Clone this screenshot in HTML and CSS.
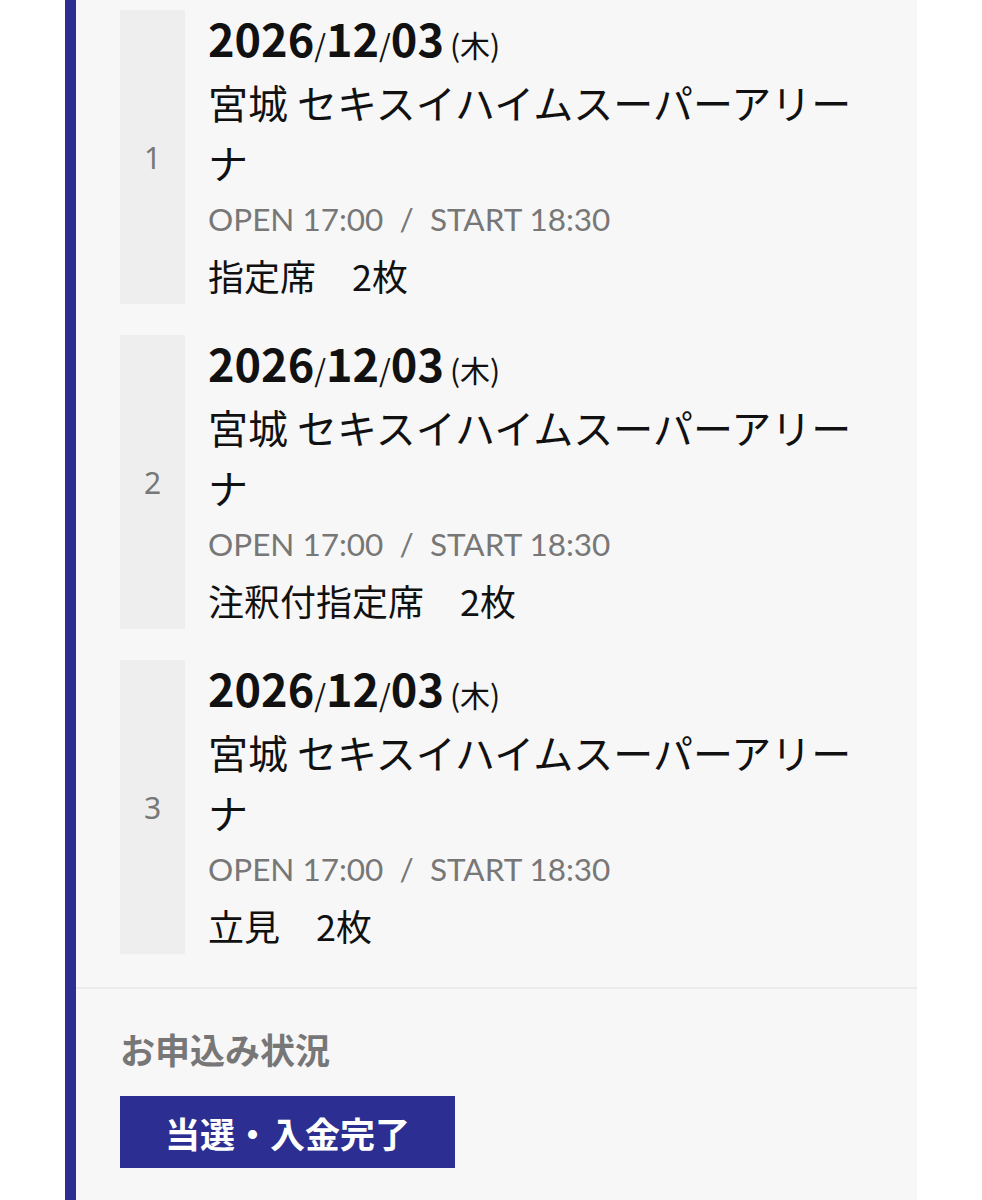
FILE: index.html
```html
<!DOCTYPE html>
<html lang="ja">
<head>
  <meta charset="UTF-8">
  <meta name="viewport" content="width=device-width, initial-scale=1.0">
  <title>お申込み内容</title>
  <link rel="stylesheet" href="styles.css">
</head>
<body>
<div class="entry">
  <ul class="performances">
    <li class="performance">
      <div class="perf-no">1</div>
      <div class="perf-body">
        <p class="perf-date">2026<span class="sep">/</span>12<span class="sep">/</span>03<span class="dow">(木)</span></p>
        <p class="perf-venue">宮城 セキスイハイムスーパーアリーナ</p>
        <p class="perf-time">OPEN 17:00&nbsp;&nbsp;/&nbsp;&nbsp;START 18:30</p>
        <p class="perf-seat">指定席　2枚</p>
      </div>
    </li>
    <li class="performance">
      <div class="perf-no">2</div>
      <div class="perf-body">
        <p class="perf-date">2026<span class="sep">/</span>12<span class="sep">/</span>03<span class="dow">(木)</span></p>
        <p class="perf-venue">宮城 セキスイハイムスーパーアリーナ</p>
        <p class="perf-time">OPEN 17:00&nbsp;&nbsp;/&nbsp;&nbsp;START 18:30</p>
        <p class="perf-seat">注釈付指定席　2枚</p>
      </div>
    </li>
    <li class="performance">
      <div class="perf-no">3</div>
      <div class="perf-body">
        <p class="perf-date">2026<span class="sep">/</span>12<span class="sep">/</span>03<span class="dow">(木)</span></p>
        <p class="perf-venue">宮城 セキスイハイムスーパーアリーナ</p>
        <p class="perf-time">OPEN 17:00&nbsp;&nbsp;/&nbsp;&nbsp;START 18:30</p>
        <p class="perf-seat">立見　2枚</p>
      </div>
    </li>
  </ul>

  <div class="status">
    <h3 class="status-title">お申込み状況</h3>
    <span class="status-badge">当選・入金完了</span>
  </div>
</div>
</body>
</html>
```

FILE: styles.css
```css
body {
  margin: 0;
  background: #fff;
  font-family: "Noto Sans CJK JP", "Noto Sans", sans-serif;
  color: #111;
}
.entry {
  margin-left: 65px;
  width: 841px;
  min-height: 1200px;
  border-left: 11px solid #2c2f91;
  background-color: #f7f7f7;
}
.performances {
  list-style: none;
  margin: 0;
  padding: 10px 36px 33px 44px;
  border-bottom: 2px solid #ebebeb;
}
.performance {
  display: flex;
  margin-bottom: 31px;
}
.performance:last-child {
  margin-bottom: 0;
}
.perf-no {
  flex: 0 0 65px;
  display: flex;
  align-items: center;
  justify-content: center;
  background-color: #eee;
  color: #777;
  font-family: "Noto Sans", sans-serif;
  font-size: 30px;
}
.perf-body {
  flex: 1;
  margin-left: 23px;
}
.perf-body p {
  margin: 0;
}
.perf-date {
  font-size: 45px;
  font-weight: 700;
  line-height: 56px;
}
.perf-date .sep {
  font-size: 30px;
  font-weight: 400;
}
.perf-date .dow {
  margin-left: 6px;
  font-size: 30px;
  font-weight: 400;
}
.perf-venue {
  font-size: 40px;
  line-height: 60px;
}
.perf-time {
  margin-top: 6px;
  font-family: "Lato", "Noto Sans", sans-serif;
  font-size: 31.5px;
  line-height: 54px;
  color: #777;
}
.perf-seat {
  font-size: 36px;
  line-height: 58px;
}
.status {
  padding: 34px 44px 40px;
}
.status-title {
  margin: 0 0 22px;
  font-size: 35px;
  font-weight: 700;
  color: #777;
}
.status-badge {
  display: inline-flex;
  align-items: center;
  height: 72px;
  padding: 0 45px;
  background-color: #2c2f91;
  color: #fff;
  font-size: 35px;
  font-weight: 700;
}
```
